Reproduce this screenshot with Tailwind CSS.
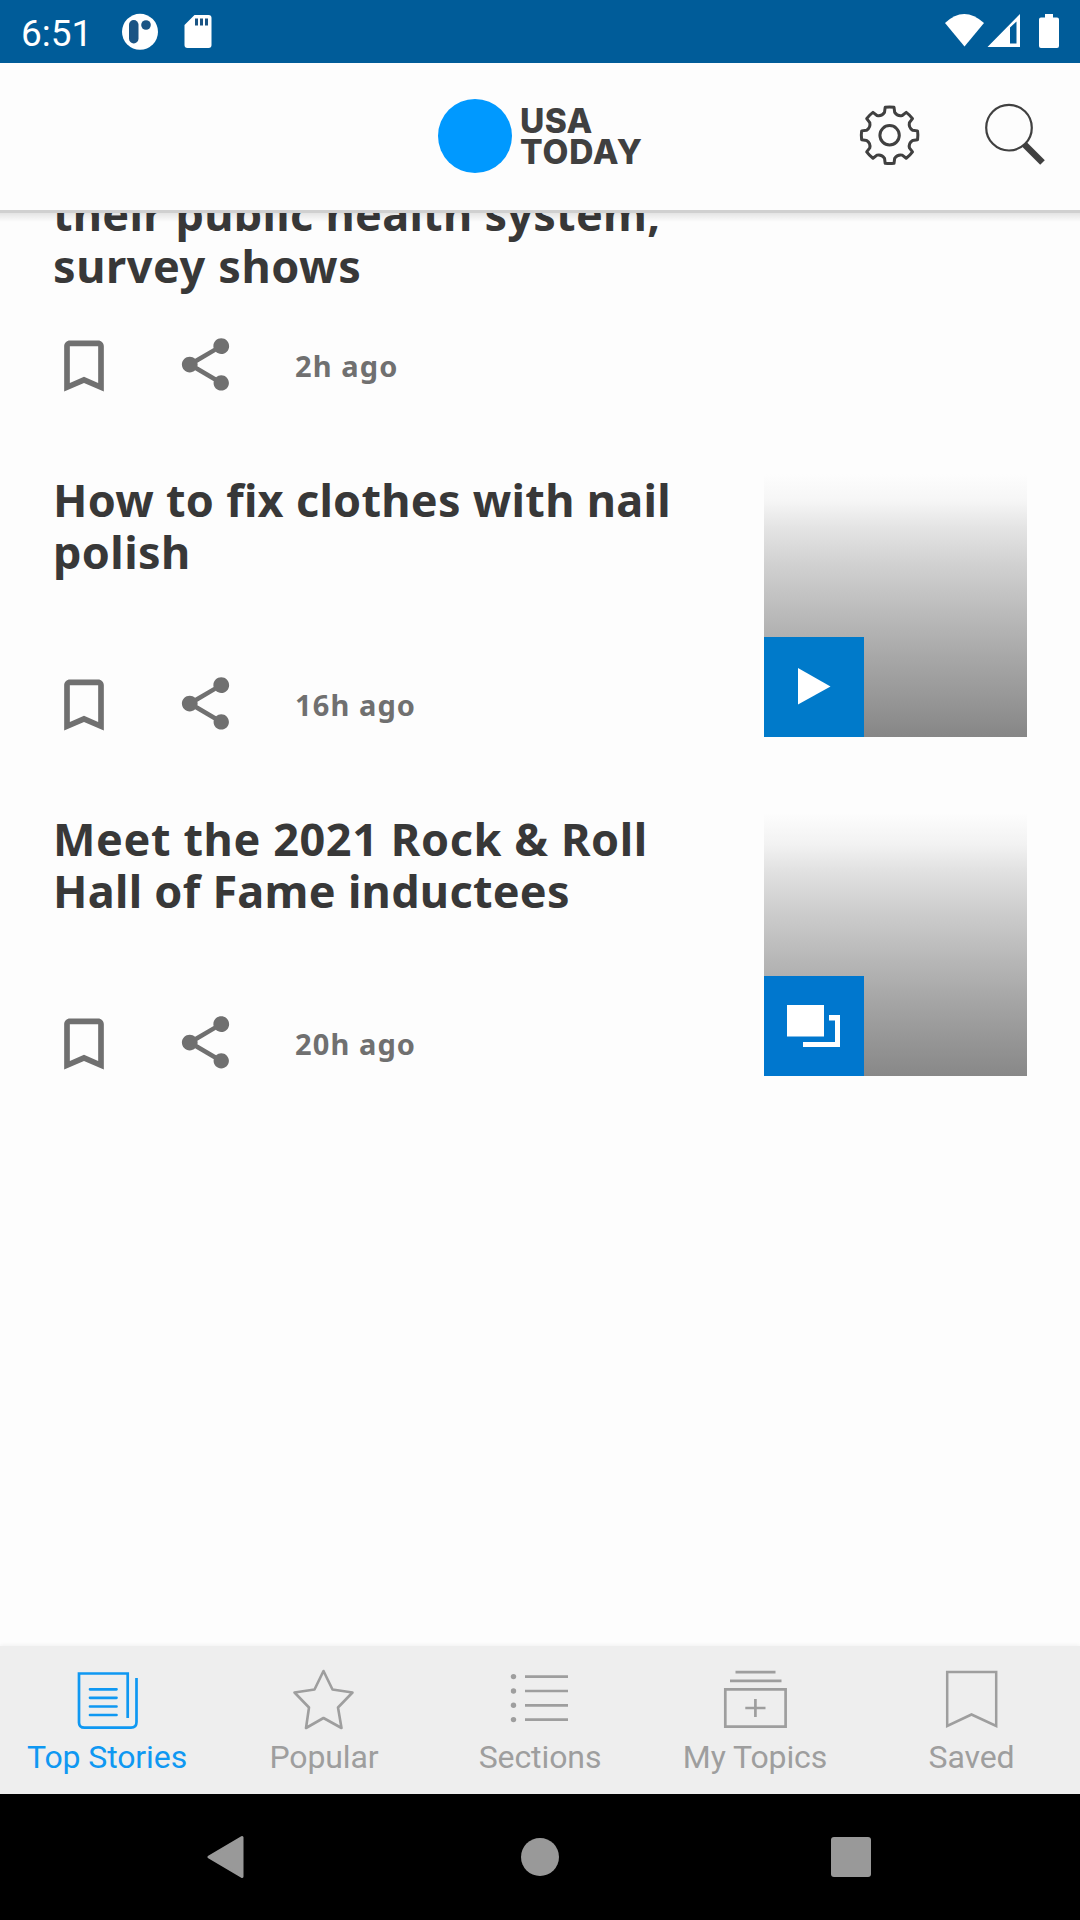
<!DOCTYPE html>
<html lang="en">
<head>
<meta charset="utf-8">
<title>USA TODAY</title>
<script src="https://cdn.jsdelivr.net/npm/@tailwindcss/browser@4"></script>
</head>
<body class="w-[1080px] h-[1920px] overflow-hidden bg-[#fdfdfd] flex flex-col font-['Roboto',sans-serif]">

<!-- Status bar -->
<div class="h-[63px] shrink-0 bg-[#005c99] flex items-center text-white">
  <span class="w-[122px] pl-[21px] pt-[4px] text-[37px] leading-[60px]">6:51</span>
  <svg class="w-9 h-[63px]" viewBox="122 0 36 63"><circle cx="140" cy="31.8" r="18" fill="#fff"/><rect x="129" y="20" width="9.500" height="23.500" rx="4.700" fill="#1a5484"/><circle cx="146" cy="25" r="4.800" fill="#1a5484"/></svg>
  <svg class="w-7 h-[63px] ml-[26px]" viewBox="184 0 28 63"><path fill="#fff" d="M194.500 15H208.500Q211.500 15 211.500 18V45Q211.500 48 208.500 48H187.500Q184.500 48 184.500 45V25Z"/><path stroke="#1a5484" stroke-width="3" d="M196.500 18.500v7M201.500 18.500v7M206.500 18.500v7"/></svg>
  <svg class="w-10 h-[63px] ml-[732px]" viewBox="944 0 40 63"><path fill="#fff" d="M945 23Q964 5 984 23L964.500 46.500Z"/></svg>
  <svg class="w-9 h-[63px] ml-[3px]" viewBox="987 0 36 63"><path fill="#fff" fill-rule="evenodd" d="M987.500 47L1020 14V47ZM1010 27.500V43.500H1016.500V21.500Z"/></svg>
  <svg class="w-5 h-[63px] ml-4" viewBox="1039 0 20 63"><path fill="#fff" d="M1045 14h8v3.500h4q2 0 2 2V46q0 2-2 2h-16q-2 0-2-2V19.500q0-2 2-2h4Z"/></svg>
</div>

<!-- App bar -->
<header class="relative z-10 h-[147px] shrink-0 bg-[#fdfdfd] flex">
  <div class="ml-[438px] w-[214px] flex">
    <div class="mt-[36px] size-[74px] rounded-full bg-[#0099ff]"></div>
    <div class="ml-[8px] mt-[43px] font-['Inter',sans-serif] font-extrabold text-[33.500px] leading-[31px] text-[#404040] whitespace-nowrap">
      <div class="tracking-[0.4px]">USA</div>
      <div class="tracking-[0.9px]">TODAY</div>
    </div>
  </div>
  <svg class="ml-[204px] w-16 h-[147px]" viewBox="856 63 64 147" fill="none" stroke="#404040" stroke-width="3" stroke-linejoin="round">
    <circle cx="889.600" cy="135.300" r="9.700"/>
    <g transform="translate(889.600 135.300)"><path id="gear" d=""/></g>
  </svg>
  <svg class="ml-[60px] w-[70px] h-[147px]" viewBox="980 63 70 147" fill="none" stroke="#404040"><circle cx="1009" cy="127.700" r="22.800" stroke-width="2.200"/><path d="M1024.500 144.500L1042.500 162.500" stroke-width="6.500"/></svg>
  <div class="absolute left-0 top-full w-full h-[3px] bg-[#d0d0d0]"></div>
  <div class="absolute left-0 top-[150px] w-full h-[9px] bg-linear-to-b from-black/10 to-transparent"></div>
</header>

<!-- Story list -->
<main class="h-[1436px] shrink-0 overflow-hidden px-[53px]">
  <div class="-mt-[75px] flex flex-col gap-[74px]">
    <article class="h-[265px] flex justify-between">
      <div class="flex flex-col">
        <h2 class="h-[197px] pt-px font-['Noto_Sans',sans-serif] font-bold text-[45px] leading-[52px] text-[#383838] whitespace-nowrap"><br><span class="tracking-[0.28px]">their public health system,</span><br><span class="tracking-[0.6px]">survey shows</span></h2>
        <div class="h-[68px] flex items-center text-[#707070]">
          <svg class="-ml-[3px] size-[68px]" viewBox="0 0 24 24" fill="currentColor"><path d="M17 3H7c-1.100 0-2 .9-2 2v16l7-3 7 3V5c0-1.100-.9-2-2-2zm0 15l-5-2.180L7 18V5h10v13z"/></svg>
          <svg class="ml-[56px] mb-[4px] size-[63px]" viewBox="0 0 24 24" fill="currentColor"><path d="M18 16.080c-.76 0-1.440.3-1.960.77L8.910 12.700c.05-.23.09-.46.09-.7s-.04-.47-.09-.7l7.050-4.110c.54.5 1.250.81 2.040.81 1.660 0 3-1.340 3-3s-1.340-3-3-3-3 1.340-3 3c0 .24.040.47.090.7L8.040 9.810C7.500 9.310 6.790 9 6 9c-1.660 0-3 1.340-3 3s1.340 3 3 3c.79 0 1.500-.31 2.040-.81l7.120 4.160c-.05.21-.08.43-.08.65 0 1.610 1.310 2.920 2.920 2.920 1.610 0 2.920-1.310 2.920-2.920s-1.310-2.920-2.920-2.920z"/></svg>
          <span class="ml-[58px] font-['Noto_Sans',sans-serif] font-bold text-[29px] tracking-[1.100px] leading-[68px] whitespace-nowrap">2h ago</span>
        </div>
      </div>
    </article>
    <article class="h-[265px] flex justify-between">
      <div class="flex flex-col">
        <h2 class="h-[197px] font-['Noto_Sans',sans-serif] font-bold text-[45px] leading-[52px] text-[#383838] whitespace-nowrap"><span class="tracking-[0.28px]">How to fix clothes with nail</span><br><span class="tracking-[0.4px]">polish</span></h2>
        <div class="h-[68px] flex items-center text-[#707070]">
          <svg class="-ml-[3px] size-[68px]" viewBox="0 0 24 24" fill="currentColor"><path d="M17 3H7c-1.100 0-2 .9-2 2v16l7-3 7 3V5c0-1.100-.9-2-2-2zm0 15l-5-2.180L7 18V5h10v13z"/></svg>
          <svg class="ml-[56px] mb-[4px] size-[63px]" viewBox="0 0 24 24" fill="currentColor"><path d="M18 16.080c-.76 0-1.440.3-1.960.77L8.910 12.700c.05-.23.09-.46.09-.7s-.04-.47-.09-.7l7.050-4.110c.54.5 1.250.81 2.040.81 1.660 0 3-1.340 3-3s-1.340-3-3-3-3 1.340-3 3c0 .24.040.47.090.7L8.040 9.810C7.500 9.310 6.790 9 6 9c-1.660 0-3 1.340-3 3s1.340 3 3 3c.79 0 1.500-.31 2.040-.81l7.120 4.160c-.05.21-.08.43-.08.65 0 1.610 1.310 2.920 2.920 2.920 1.610 0 2.920-1.310 2.920-2.920s-1.310-2.920-2.920-2.920z"/></svg>
          <span class="ml-[58px] font-['Noto_Sans',sans-serif] font-bold text-[29px] tracking-[1.100px] leading-[68px] whitespace-nowrap">16h ago</span>
        </div>
      </div>
      <div class="size-[263px] flex items-end bg-[linear-gradient(#fdfdfd,#f6f6f6_10%,#e3e3e3_21%,#d0d0d0_35%,#b8b8b8_55%,#a7a7a7_70%,#969696_86%,#868686)]">
        <svg class="size-[100px] bg-[#007aca]" viewBox="764 637 100 100"><path fill="#fff" d="M798 668L830.500 686.500L798 704.500Z"/></svg>
      </div>
    </article>
    <article class="h-[265px] flex justify-between">
      <div class="flex flex-col">
        <h2 class="h-[197px] font-['Noto_Sans',sans-serif] font-bold text-[45px] leading-[52px] text-[#383838] whitespace-nowrap"><span class="tracking-[0.6px]">Meet the 2021 Rock &amp; Roll</span><br><span class="tracking-[0.28px]">Hall of Fame inductees</span></h2>
        <div class="h-[68px] flex items-center text-[#707070]">
          <svg class="-ml-[3px] size-[68px]" viewBox="0 0 24 24" fill="currentColor"><path d="M17 3H7c-1.100 0-2 .9-2 2v16l7-3 7 3V5c0-1.100-.9-2-2-2zm0 15l-5-2.180L7 18V5h10v13z"/></svg>
          <svg class="ml-[56px] mb-[4px] size-[63px]" viewBox="0 0 24 24" fill="currentColor"><path d="M18 16.080c-.76 0-1.440.3-1.960.77L8.910 12.700c.05-.23.09-.46.09-.7s-.04-.47-.09-.7l7.050-4.110c.54.5 1.250.81 2.040.81 1.660 0 3-1.340 3-3s-1.340-3-3-3-3 1.340-3 3c0 .24.040.47.090.7L8.040 9.810C7.500 9.310 6.790 9 6 9c-1.660 0-3 1.340-3 3s1.340 3 3 3c.79 0 1.500-.31 2.040-.81l7.120 4.160c-.05.21-.08.43-.08.65 0 1.610 1.310 2.920 2.920 2.920 1.610 0 2.920-1.310 2.920-2.920s-1.310-2.920-2.920-2.920z"/></svg>
          <span class="ml-[58px] font-['Noto_Sans',sans-serif] font-bold text-[29px] tracking-[1.100px] leading-[68px] whitespace-nowrap">20h ago</span>
        </div>
      </div>
      <div class="size-[263px] flex items-end bg-[linear-gradient(#fdfdfd,#f2f2f2_12%,#e3e3e3_21%,#d0d0d0_35%,#b8b8b8_55%,#a7a7a7_70%,#969696_86%,#888888)]">
        <svg class="size-[100px] bg-[#0077ce]" viewBox="764 976 100 100" fill="#fff"><path d="M787 1005h37v31.500h-37ZM829 1015h11v32h-37v-5h32v-21.500h-6Z"/></svg>
      </div>
    </article>
  </div>
</main>

<!-- Tab bar -->
<nav class="h-[148px] shrink-0 bg-[#eeeeee] grid grid-cols-5 text-[32px] tracking-[-0.1px] leading-[38px] text-[#9e9e9e] text-center whitespace-nowrap shadow-[0_-1px_4px_rgba(0,0,0,0.05)]">
  <div class="flex flex-col items-center pt-5 text-[#0f98f2]">
    <svg class="w-[72px] h-[72px]" viewBox="72 1666 72 72" fill="none" stroke="currentColor" stroke-width="2.700"><path d="M127.700 1718V1673.500H79V1722.500Q79 1727.700 84.500 1727.700H131Q136.500 1727.700 136.500 1722V1678"/><path stroke-linecap="round" d="M90 1689.300h26.500M90 1697.800h26.500M90 1706.500h26.500M90 1715h26.500"/></svg>
    <span class="mr-[2px]">Top Stories</span>
  </div>
  <div class="flex flex-col items-center pt-5">
    <svg class="w-[72px] h-[72px]" viewBox="288 1666 72 72" fill="none" stroke="currentColor" stroke-width="2.600" stroke-linejoin="round"><path d="M323.500 1671L332.500 1689.500L352.500 1692.500L338 1707.500L341.500 1728L323.500 1718L306 1728L309 1707.500L294.500 1692.500L314.500 1689.500Z"/></svg>
    <span>Popular</span>
  </div>
  <div class="flex flex-col items-center pt-5">
    <svg class="w-[72px] h-[72px]" viewBox="504 1666 72 72" fill="currentColor"><path stroke="currentColor" stroke-width="2.700" d="M525 1676.600h43M525 1691h43M525 1705.300h43M525 1719.600h43"/><circle cx="513.500" cy="1676.600" r="2.700"/><circle cx="513.500" cy="1691" r="2.700"/><circle cx="513.500" cy="1705.300" r="2.700"/><circle cx="513.500" cy="1719.600" r="2.700"/></svg>
    <span>Sections</span>
  </div>
  <div class="flex flex-col items-center pt-5">
    <svg class="w-[72px] h-[72px]" viewBox="720 1666 72 72" fill="none" stroke="currentColor" stroke-width="2.700"><path d="M725.300 1689.300h60.300v37.300h-60.300ZM730 1680.800h51.500M735.500 1672.200h40M745.300 1708h20.200M755.400 1699v18"/></svg>
    <span class="mr-[2px]">My Topics</span>
  </div>
  <div class="flex flex-col items-center pt-5">
    <svg class="w-[72px] h-[72px]" viewBox="936 1666 72 72" fill="none" stroke="currentColor" stroke-width="2.500"><path d="M947.200 1672H996.200V1726L971.500 1714.500L947.200 1726Z"/></svg>
    <span class="mr-px">Saved</span>
  </div>
</nav>

<!-- System navigation -->
<div class="h-[126px] shrink-0 bg-black flex items-center">
  <svg class="ml-[207px] w-[37px] h-[44px]" viewBox="0 0 37 44"><path fill="#999" stroke="#999" stroke-width="3" stroke-linejoin="round" d="M35 2.500V41.500L2 22Z"/></svg>
  <div class="ml-[277px] w-[38px] h-[38px] rounded-full bg-[#999]"></div>
  <div class="ml-[272px] w-[40px] h-[40px] rounded-[3px] bg-[#999]"></div>
</div>

<script>
  // Eight-tooth gear outline around the origin
  const P = (r, a) => { const t = a * Math.PI / 180; return (r * Math.cos(t)).toFixed(2) + ' ' + (r * Math.sin(t)).toFixed(2); };
  let d = '';
  for (let i = 0; i < 8; i++) {
    const a = i * 45;
    d += (i ? 'L' : 'M') + P(23.5, a - 12.5) + 'L' + P(28.3, a - 9) + 'A28.3 28.3 0 0 1 ' + P(28.3, a + 9) + 'L' + P(23.5, a + 12.5) + 'A7.200 7.200 0 0 0 ' + P(23.5, a + 32.5);
  }
  document.getElementById('gear').setAttribute('d', d + 'Z');
</script>
</body>
</html>
